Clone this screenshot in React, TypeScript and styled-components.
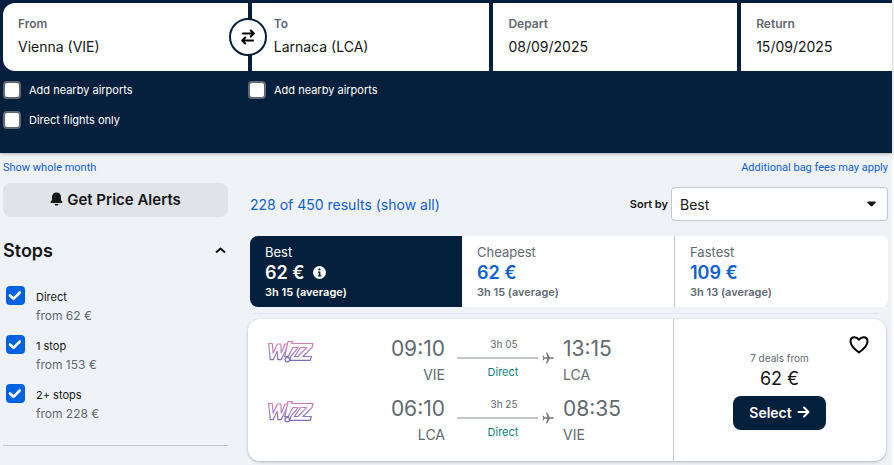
import React from "react";
import styled, { createGlobalStyle } from "styled-components";

const navy = "#05203c";
const blue = "#0f5fd4";
const grey = "#626971";
const ink = "#161616";
const line = "#c1c7cf";

const GlobalStyle = createGlobalStyle`
  *, *::before, *::after { box-sizing: border-box; }
  html { background: #eff2f7; }
  body {
    margin: 0;
    overflow-x: hidden;
    font-family: Inter, "Liberation Sans", sans-serif;
    font-size: 14px;
    color: ${ink};
  }
  button, input, select { font: inherit; color: inherit; }
  h2, p { margin: 0; }
`;

const Page = styled.div`
  padding-bottom: 4px;
  background: #eff2f7;
  border-right: 2px solid #fff;
`;

const Header = styled.header`
  background: ${navy};
  height: 153px;
  padding: 3px 0 0 3px;
  box-shadow: 0 1px 3px rgba(37, 32, 31, 0.3);
`;

const Fields = styled.div`
  display: grid;
  grid-template-columns: 245fr 238fr 244fr 151fr;
  gap: 4px;
`;

const Field = styled.div<{ $first?: boolean }>`
  position: relative;
  display: flex;
  flex-direction: column;
  min-width: 0;
  height: 68px;
  padding: 13px 0 0 15px;
  background: #fff;
  border-radius: ${(p) => (p.$first ? "12px 0 0 12px" : "0")};
`;

const FieldLabel = styled.label`
  font-size: 12px;
  line-height: 16px;
  font-weight: 600;
  color: ${grey};
`;

const FieldInput = styled.input`
  width: 100%;
  height: 24px;
  margin-top: 2px;
  padding: 0;
  border: 0;
  outline: 0;
  background: transparent;
`;

const ToField = styled(Field)`
  padding-left: 22px;
`;

const SwapButton = styled.button`
  position: absolute;
  top: 15px;
  right: -19px;
  z-index: 1;
  display: grid;
  place-items: center;
  width: 38px;
  height: 38px;
  padding: 0;
  border: 2px solid ${navy};
  border-radius: 50%;
  background: #fff;
`;

const Options = styled.div`
  display: grid;
  grid-template-columns: 245fr 644fr;
  row-gap: 10px;
  padding-top: 9px;
`;

const Option = styled.label`
  display: flex;
  align-items: center;
  gap: 8px;
  height: 20px;
  font-size: 11px;
  color: #fff;
`;

const OptionBox = styled.input`
  appearance: none;
  width: 18px;
  height: 18px;
  margin: 0;
  border: 2px solid ${grey};
  border-radius: 4px;
  background: #fff;
`;

const Notes = styled.div`
  display: flex;
  justify-content: space-between;
  padding: 8px 4px 0 3px;
  font-family: Roboto, "Liberation Sans", sans-serif;
  font-size: 11px;
  line-height: 14px;
`;

const Link = styled.a`
  color: ${blue};
  text-decoration: none;
`;

const Columns = styled.div`
  display: grid;
  grid-template-columns: 225px 1fr;
  gap: 20px;
  padding: 8px 4px 0 3px;
`;

const Sidebar = styled.aside`
  min-width: 0;
`;

const AlertButton = styled.button`
  display: flex;
  align-items: center;
  justify-content: center;
  gap: 4px;
  width: 100%;
  height: 34px;
  padding: 0 0 2px;
  border: 0;
  border-radius: 8px;
  background: #e0e3e8;
  font-size: 15px;
  font-weight: 600;
`;

const SectionToggle = styled.button`
  display: flex;
  align-items: center;
  justify-content: space-between;
  width: 100%;
  height: 24px;
  margin-top: 21px;
  padding: 0 2px 0 0;
  border: 0;
  background: transparent;
  font-size: 18px;
  font-weight: 600;
`;

const StopList = styled.div`
  display: flex;
  flex-direction: column;
  gap: 9px;
  padding: 24px 0 21px 3px;
  border-bottom: 1px solid ${line};
`;

const Stop = styled.label`
  display: grid;
  grid-template-columns: 19px 1fr;
  column-gap: 11px;
  height: 40px;
`;

const TickWrap = styled.span`
  display: grid;
  height: 19px;
  > * { grid-area: 1 / 1; }
`;

const Tick = styled.input`
  appearance: none;
  width: 19px;
  height: 19px;
  margin: 0;
  border-radius: 4px;
  background: #0062e3;
`;

const StopText = styled.span`
  display: flex;
  flex-direction: column;
  padding-top: 2px;
`;

const StopName = styled.span`
  font-size: 11px;
  line-height: 18px;
`;

const StopPrice = styled.span`
  font-size: 12px;
  line-height: 20px;
  color: ${grey};
`;

const Main = styled.main`
  min-width: 0;
`;

const Toolbar = styled.div`
  display: flex;
  align-items: center;
  justify-content: space-between;
  padding: 4px 0 0 2px;
`;

const ResultsLink = styled(Link)`
  font-size: 14px;
`;

const Sort = styled.div`
  display: flex;
  align-items: center;
  gap: 3px;
`;

const SortLabel = styled.label`
  font-size: 11px;
  font-weight: 600;
`;

const SelectWrap = styled.div`
  display: grid;
  align-items: center;
  width: 217px;
  > * { grid-area: 1 / 1; }
`;

const SortSelect = styled.select`
  appearance: none;
  width: 100%;
  height: 34px;
  padding: 0 28px 0 8px;
  border: 1px solid ${line};
  border-radius: 4px;
  background: #fff;
`;

const Caret = styled.svg`
  justify-self: end;
  margin-right: 12px;
  pointer-events: none;
`;

const Tabs = styled.div`
  display: grid;
  grid-template-columns: 212fr 212fr 214fr;
  height: 71px;
  margin: 15px 0 0 2px;
  border-radius: 8px;
  background: #fff;
  overflow: hidden;
`;

const Tab = styled.button<{ $active?: boolean; $divided?: boolean }>`
  display: flex;
  flex-direction: column;
  align-items: flex-start;
  padding: 7px 0 0 15px;
  border: 0;
  border-left: ${(p) => (p.$divided ? `1px solid ${line}` : "0")};
  background: ${(p) => (p.$active ? navy : "#fff")};
  color: ${(p) => (p.$active ? "#fff" : grey)};
  text-align: left;
`;

const TabName = styled.span`
  font-size: 13px;
  line-height: 18px;
`;

const TabPrice = styled.span<{ $active?: boolean }>`
  display: flex;
  align-items: center;
  gap: 9px;
  font-size: 18px;
  line-height: 23px;
  font-weight: 600;
  color: ${(p) => (p.$active ? "#fff" : blue)};
`;

const TabTime = styled.span`
  font-size: 11px;
  line-height: 16px;
  font-weight: 600;
`;

const Edge = styled.div`
  height: 1px;
  margin: 6px 10px 5px 6px;
  background: #e2e6ec;
`;

const Card = styled.article`
  display: grid;
  grid-template-columns: 425fr 213fr;
  height: 142px;
  margin-right: 2px;
  border-radius: 12px;
  background: #fff;
  box-shadow: 0 1px 3px rgba(37, 32, 31, 0.3);
`;

const Legs = styled.div`
  display: flex;
  flex-direction: column;
  padding-top: 14px;
`;

const Leg = styled.div`
  display: grid;
  grid-template-columns: 46px 1fr 118px 110px;
  height: 60px;
  padding-left: 20px;
`;

const Logo = styled.svg`
  margin-top: 6px;
`;

const Place = styled.div<{ $end?: boolean }>`
  display: flex;
  flex-direction: column;
  align-items: ${(p) => (p.$end ? "flex-end" : "flex-start")};
  color: ${grey};
`;

const Time = styled.span`
  font-size: 21px;
  line-height: 31px;
`;

const Code = styled.span`
  font-size: 14px;
  line-height: 22px;
`;

const Route = styled.div`
  display: flex;
  flex-direction: column;
  margin: 3px 0 0 12px;
  font-size: 10px;
  line-height: 16px;
  color: ${grey};
`;

const Duration = styled.span`
  padding-right: 4px;
  text-align: center;
  width: 98px;
`;

const Track = styled.div`
  display: flex;
  align-items: center;
  gap: 4px;
  width: 97px;
  height: 12px;
`;

const Bar = styled.span`
  flex: 1;
  height: 2px;
  background: ${line};
`;

const Direct = styled.span`
  width: 92px;
  font-size: 11px;
  text-align: center;
  color: #147f80;
`;

const Deal = styled.div`
  display: flex;
  flex-direction: column;
  align-items: center;
  padding: 14px 16px 0 15px;
  border-left: 1px solid ${line};
`;

const SaveButton = styled.button`
  align-self: flex-end;
  display: grid;
  width: 22px;
  height: 22px;
  padding: 0;
  border: 0;
  background: transparent;
`;

const DealNote = styled.p`
  margin-top: -4px;
  font-size: 10px;
  line-height: 14px;
  color: ${grey};
`;

const DealPrice = styled.p`
  margin-top: 2px;
  font-size: 18px;
  line-height: 24px;
`;

const SelectButton = styled.button`
  display: flex;
  align-items: center;
  justify-content: center;
  gap: 5px;
  width: 93px;
  height: 34px;
  margin-top: 5px;
  padding: 0 0 2px;
  border: 0;
  border-radius: 8px;
  background: ${navy};
  font-weight: 600;
  color: #fff;
`;

function WizzLogo({ id }: { id: string }) {
  return (
    <Logo width="46" height="26" viewBox="0 0 46 26" role="img" aria-label="Wizz">
      <defs>
        <linearGradient id={id} x1="0" y1="2" x2="0" y2="23" gradientUnits="userSpaceOnUse">
          <stop offset="0" stopColor="#de76b0" />
          <stop offset="0.45" stopColor="#b685c6" />
          <stop offset="1" stopColor="#7068bd" />
        </linearGradient>
      </defs>
      <g fill="#fff" stroke={`url(#${id})`} strokeWidth="1.200" strokeLinejoin="round">
        <path d="M.6 4.500h3.700l.8 9.500L9.500 5h3.400l.4 9L17 5h3.700l-7.500 15.700H9.800L9.300 12 5.200 20.700H2.300z" />
        <path d="M20 2.500h4.500l-.8 2H45l-1 4-9 9h8.500l-1.300 3.800H21.700l1.200-4 7.400-8.800h-5.500l-4.600 9.200h-3.500z" />
        <path d="M32.500 8.500h6.200l-8.900 9h-3.300z" />
        <circle cx="19.300" cy="20.600" r="2.300" />
      </g>
    </Logo>
  );
}

function Plane() {
  return (
    <svg width="12" height="12" viewBox="0 0 12 12" fill="#7b7983" aria-hidden="true">
      <path d="M12 6c0-.6-.6-.8-1.300-.8H7.800L5.200.5H4l1.300 4.700H2.700L1.500 3.700H.5L1.200 6 .5 8.300h1l1.200-1.500h2.600L4 11.500h1.200l2.600-4.700h2.900c.7 0 1.300-.2 1.300-.8z" />
    </svg>
  );
}

const stops = [
  { name: "Direct", price: "from 62 €" },
  { name: "1 stop", price: "from 153 €" },
  { name: "2+ stops", price: "from 228 €" },
];

const legs = [
  { depart: "09:10", from: "VIE", time: "3h 05", arrive: "13:15", to: "LCA" },
  { depart: "06:10", from: "LCA", time: "3h 25", arrive: "08:35", to: "VIE" },
];

export default function App() {
  return (
    <Page>
      <GlobalStyle />
      <Header>
        <Fields>
          <Field $first>
            <FieldLabel htmlFor="from">From</FieldLabel>
            <FieldInput id="from" defaultValue="Vienna (VIE)" />
            <SwapButton aria-label="Swap origin and destination">
              <svg width="14" height="16" viewBox="0 0 14 16" fill="none" stroke="#000" strokeWidth="2" strokeLinecap="round" strokeLinejoin="round">
                <path d="M2 4.500h10.500M9.800 1.500l3 3-3 3M12 11.500H1.500M4.200 8.500l-3 3 3 3" />
              </svg>
            </SwapButton>
          </Field>
          <ToField>
            <FieldLabel htmlFor="to">To</FieldLabel>
            <FieldInput id="to" defaultValue="Larnaca (LCA)" />
          </ToField>
          <Field>
            <FieldLabel htmlFor="depart">Depart</FieldLabel>
            <FieldInput id="depart" defaultValue="08/09/2025" />
          </Field>
          <Field>
            <FieldLabel htmlFor="return">Return</FieldLabel>
            <FieldInput id="return" defaultValue="15/09/2025" />
          </Field>
        </Fields>
        <Options>
          <Option><OptionBox type="checkbox" />Add nearby airports</Option>
          <Option><OptionBox type="checkbox" />Add nearby airports</Option>
          <Option><OptionBox type="checkbox" />Direct flights only</Option>
        </Options>
      </Header>
      <Notes>
        <Link href="#month">Show whole month</Link>
        <Link href="#bags">Additional bag fees may apply</Link>
      </Notes>
      <Columns>
        <Sidebar>
          <AlertButton>
            <svg width="13" height="14" viewBox="0 0 13 14" fill={ink} aria-hidden="true">
              <path d="M6.500.5C3.700.5 2 2.500 2 5v3L.7 9.600c-.5.7-.1 1.400.6 1.400h10.400c.7 0 1.100-.7.6-1.400L11 8V5C11 2.500 9.300.5 6.500.5zM4.500 12h4c-.2 1-1 1.600-2 1.600s-1.800-.6-2-1.600z" />
            </svg>
            Get Price Alerts
          </AlertButton>
          <h2>
            <SectionToggle aria-expanded="true">
              Stops
              <svg width="11" height="8" viewBox="0 0 11 8" fill="none" stroke={ink} strokeWidth="2" aria-hidden="true">
                <path d="M1 6.500l4.500-4 4.500 4" strokeLinejoin="round" />
              </svg>
            </SectionToggle>
          </h2>
          <StopList>
            {stops.map((s) => (
              <Stop key={s.name}>
                <TickWrap>
                  <Tick type="checkbox" defaultChecked />
                  <svg width="19" height="19" viewBox="0 0 19 19" fill="none" stroke="#fff" strokeWidth="2.600" strokeLinecap="round" strokeLinejoin="round" aria-hidden="true">
                    <path d="M4 9.500l3.500 3.300 6.300-6.300" />
                  </svg>
                </TickWrap>
                <StopText>
                  <StopName>{s.name}</StopName>
                  <StopPrice>{s.price}</StopPrice>
                </StopText>
              </Stop>
            ))}
          </StopList>
        </Sidebar>
        <Main>
          <Toolbar>
            <ResultsLink href="#all">228 of 450 results (show all)</ResultsLink>
            <Sort>
              <SortLabel htmlFor="sort">Sort by</SortLabel>
              <SelectWrap>
                <SortSelect id="sort">
                  <option>Best</option>
                  <option>Cheapest</option>
                  <option>Fastest</option>
                </SortSelect>
                <Caret width="9" height="6" viewBox="0 0 9 6" fill={ink} aria-hidden="true">
                  <path d="M1 .5h7c.8 0 1.100.7.6 1.200L5.300 5c-.5.500-1.100.500-1.600 0L.4 1.700C-.1 1.200.2.500 1 .500z" />
                </Caret>
              </SelectWrap>
            </Sort>
          </Toolbar>
          <Tabs>
            <Tab $active>
              <TabName>Best</TabName>
              <TabPrice $active>
                62 €
                <svg width="13" height="13" viewBox="0 0 13 13" aria-hidden="true">
                  <circle cx="6.500" cy="6.500" r="6.500" fill="#fff" />
                  <circle cx="6.500" cy="3.400" r="1.100" fill={navy} />
                  <path d="M5 5.600h2.400v3.600h.9v1.200H4.900V9.200h.9V6.800H5z" fill={navy} />
                </svg>
              </TabPrice>
              <TabTime>3h 15 (average)</TabTime>
            </Tab>
            <Tab>
              <TabName>Cheapest</TabName>
              <TabPrice>62 €</TabPrice>
              <TabTime>3h 15 (average)</TabTime>
            </Tab>
            <Tab $divided>
              <TabName>Fastest</TabName>
              <TabPrice>109 €</TabPrice>
              <TabTime>3h 13 (average)</TabTime>
            </Tab>
          </Tabs>
          <Edge />
          <Card>
            <Legs>
              {legs.map((l) => (
                <Leg key={l.depart}>
                  <WizzLogo id={`wizz-${l.from}`} />
                  <Place $end>
                    <Time>{l.depart}</Time>
                    <Code>{l.from}</Code>
                  </Place>
                  <Route>
                    <Duration>{l.time}</Duration>
                    <Track><Bar /><Plane /></Track>
                    <Direct>Direct</Direct>
                  </Route>
                  <Place>
                    <Time>{l.arrive}</Time>
                    <Code>{l.to}</Code>
                  </Place>
                </Leg>
              ))}
            </Legs>
            <Deal>
              <SaveButton aria-label="Save flight">
                <svg width="22" height="22" viewBox="0 0 22 22" fill="none" stroke="#000" strokeWidth="2" strokeLinejoin="round">
                  <path d="M11 19.500C7.500 17 2.500 13 2.500 8.500c0-2.500 1.700-4.200 4-4.200 2 0 3.500 1.200 4.500 2.400 1-1.200 2.500-2.400 4.500-2.400 2.300 0 4 1.700 4 4.200 0 4.500-5 8.500-8.500 11z" />
                </svg>
              </SaveButton>
              <DealNote>7 deals from</DealNote>
              <DealPrice>62 €</DealPrice>
              <SelectButton>
                Select
                <svg width="13" height="12" viewBox="0 0 13 12" fill="none" stroke="#fff" strokeWidth="2" strokeLinecap="round" strokeLinejoin="round" aria-hidden="true">
                  <path d="M1.500 6h10M7 1.500L11.500 6 7 10.500" />
                </svg>
              </SelectButton>
            </Deal>
          </Card>
        </Main>
      </Columns>
    </Page>
  );
}
